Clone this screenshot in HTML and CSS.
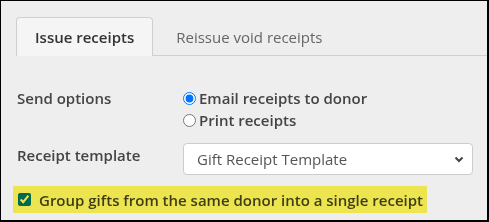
FILE: index.html
```html
<!DOCTYPE html>
<html>
<head>
  <meta charset="utf-8">
  <link rel="stylesheet" href="styles.css">
</head>
<body>
  <div class="frame">
    <div class="tabs">
      <div class="tab active">Issue receipts</div>
      <div class="tab">Reissue void receipts</div>
    </div>

    <div class="form">
      <div class="form-row">
        <div class="form-label">Send options</div>
        <div class="radio-group">
          <label class="radio"><input type="radio" name="send" checked> Email receipts to donor</label>
          <label class="radio"><input type="radio" name="send"> Print receipts</label>
        </div>
      </div>

      <div class="form-row template-row">
        <div class="form-label">Receipt template</div>
        <div class="select-box">
          <span>Gift Receipt Template</span>
          <svg class="chevron" width="10" height="7" viewBox="0 0 10 7"><path d="M1.5 1.5 L5 5 L8.5 1.5" fill="none" stroke="#444" stroke-width="2"/></svg>
        </div>
      </div>

      <label class="highlight"><input type="checkbox" checked> Group gifts from the same donor into a single receipt</label>
    </div>
  </div>
</body>
</html>
```

FILE: styles.css
```css
body {
  margin: 0;
  padding: 0;
  font-family: "Open Sans", "Noto Sans", sans-serif;
  font-size: 15px;
  color: #444;
}

.frame {
  width: 489px;
  height: 222px;
  box-sizing: border-box;
  border: 1px solid #000;
  border-right-width: 2px;
  border-bottom-width: 2px;
  background: #eeeeee;
  padding: 16px 0 0 15px;
}

.tabs {
  display: flex;
  gap: 4px;
  border-bottom: 1px solid #cfcfcf;
  height: 38px;
}

.tab {
  padding: 0 18px;
  line-height: 38px;
  color: #666;
  margin-bottom: -1px;
  border: 1px solid transparent;
  border-bottom: none;
}

.tab.active {
  background: #f5f5f5;
  border-color: #cfcfcf;
  border-radius: 4px 4px 0 0;
  color: #333;
  font-weight: 600;
  height: 38px;
}

.form {
  padding: 31px 0 0 1px;
}

.form-row {
  display: flex;
}

.form-label {
  width: 166px;
  font-weight: 600;
  line-height: 22px;
}

.radio-group {
  display: flex;
  flex-direction: column;
}

.radio {
  display: flex;
  align-items: center;
  gap: 3px;
  line-height: 22px;
  font-weight: 600;
}

.radio input {
  margin: 0;
  width: 13px;
  height: 13px;
}

.template-row {
  margin-top: 12px;
}

.template-row .form-label {
  padding-top: 1px;
}

.select-box {
  width: 290px;
  height: 32px;
  box-sizing: border-box;
  border: 1px solid #ccc;
  border-radius: 4px;
  background: #fff;
  display: flex;
  align-items: center;
  justify-content: space-between;
  padding: 0 8px 0 13px;
  color: #555;
}

.highlight {
  display: inline-flex;
  align-items: center;
  gap: 8px;
  margin: 11px 0 0 -4px;
  height: 27px;
  padding: 0 4px 0 5px;
  background: #ece54f;
  color: #3f3d18;
  font-weight: 600;
}

.highlight input {
  margin: 0;
  width: 13px;
  height: 13px;
  mix-blend-mode: multiply;
}
```
